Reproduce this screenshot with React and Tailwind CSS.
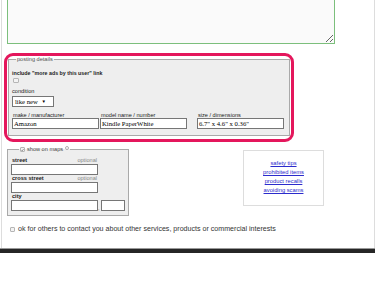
export default function App() {
  const sans = { fontFamily: '"Liberation Sans", Arial, sans-serif' };
  const serif = { fontFamily: '"Liberation Serif", "Times New Roman", serif' };
  const Input = ({ w, value }) => (
    <div
      className={`h-[11px] ${w} shrink-0 border border-[#767676] bg-white text-[6.7px] leading-[9px] pl-[1px] text-black overflow-hidden whitespace-nowrap`}
      style={serif}
    >
      {value}
    </div>
  );
  return (
    <div className="w-[375px] h-[281px] overflow-hidden bg-white" style={sans}>
      <div className="ml-px w-[374px] h-[248px] border-l border-r border-[#dddddd] overflow-hidden">
        <textarea
          className="block ml-[5px] w-[328px] h-[44px] border border-t-0 border-[#7cbf7c] bg-[#fafafa] outline-none"
          defaultValue=""
        />
        <div className="mt-[9px] ml-[2px] w-[290px] h-[89px] border-[3px] border-[#e4175c] rounded-[9px] overflow-hidden">
          <fieldset className="ml-px w-[282px] border border-[#a9a9a9] bg-[#eeeeee] px-px pb-[6px]">
            <legend className="ml-[6px] px-px text-[5.6px] leading-[7px] text-[#555]">posting details</legend>
            <div className="mt-[7px] ml-[2px] text-[5.3px] leading-[7px] font-bold text-[#222]">
              include "more ads by this user" link
            </div>
            <div className="mt-px ml-[3px] w-[6px] h-[5px] border border-[#b5b5b5] rounded-[1px] bg-[#f3f3f3]" />
            <div className="mt-[5px] ml-[2px] text-[5.6px] leading-[7px] text-[#222]">condition</div>
            <div
              className="mt-px ml-[2px] w-[42px] h-[11px] border border-[#767676] bg-white flex items-center justify-between pl-[2px] pr-[7px]"
            >
              <span className="text-[6.7px] leading-[9px] text-black" style={serif}>like new</span>
              <span className="text-[4.5px] leading-[5px] text-black">▼</span>
            </div>
            <div className="mt-[5px] flex">
              <div className="ml-[2px] w-[87px]">
                <div className="pl-px text-[5.6px] leading-[6px] text-[#222] whitespace-nowrap">make / manufacturer</div>
                <Input w="w-[87px]" value="Amazon" />
              </div>
              <div className="ml-px w-[87px]">
                <div className="pl-px text-[5.6px] leading-[6px] text-[#222] whitespace-nowrap">model name / number</div>
                <Input w="w-[87px]" value="Kindle PaperWhite" />
              </div>
              <div className="ml-[10px] w-[87px]">
                <div className="pl-px text-[5.6px] leading-[6px] text-[#222] whitespace-nowrap">size / dimensions</div>
                <Input w="w-[87px]" value={'6.7" x 4.6" x 0.36"'} />
              </div>
            </div>
          </fieldset>
        </div>
        <div className="mt-[4px] flex items-start">
          <fieldset className="ml-[5px] w-[122px] shrink-0 border border-[#a9a9a9] bg-[#eeeeee] pb-[4px]">
            <legend className="ml-[11px] px-px flex items-center text-[5.6px] leading-[7px] text-[#444]">
              <span className="w-[5px] h-[5px] border border-[#b5b5b5] rounded-[1px] bg-[#f3f3f3] flex items-center justify-center">
                <svg width="4" height="4" viewBox="0 0 4 4">
                  <path d="M0.5 2 L1.6 3.1 L3.5 0.8" stroke="#555" strokeWidth="0.8" fill="none" />
                </svg>
              </span>
              <span className="ml-[2px]">show on maps</span>
              <svg className="ml-[2px] -mt-[3px]" width="4" height="4" viewBox="0 0 4 4">
                <circle cx="2" cy="2" r="1.5" stroke="#666" strokeWidth="0.5" fill="none" />
              </svg>
            </legend>
            <div className="mt-[4px] ml-[3px]">
              <div className="w-[87px] flex justify-between px-px text-[5.6px] leading-[6px]">
                <span className="font-bold text-[#222]">street</span>
                <span className="text-[#888]">optional</span>
              </div>
              <div className="mt-px"><Input w="w-[87px]" value="" /></div>
              <div className="w-[87px] flex justify-between px-px text-[5.6px] leading-[6px]">
                <span className="font-bold text-[#222]">cross street</span>
                <span className="text-[#888]">optional</span>
              </div>
              <div className="mt-px"><Input w="w-[87px]" value="" /></div>
              <div className="px-px text-[5.6px] leading-[6px] font-bold text-[#222]">city</div>
              <div className="mt-px flex items-end">
                <Input w="w-[87px]" value="" />
                <span className="w-[3px] shrink-0 text-[5.6px] leading-[5px] text-[#222]">,</span>
                <Input w="w-[24px]" value="" />
              </div>
            </div>
          </fieldset>
          <div className="ml-[114px] mt-[4px] w-[81px] h-[56px] shrink-0 border border-[#dddddd] pt-[8px] flex flex-col items-center">
            {["safety tips", "prohibited items", "product recalls", "avoiding scams"].map((t) => (
              <span key={t} className="text-[5.8px] leading-[9px] text-[#2b2bcc] underline">{t}</span>
            ))}
          </div>
        </div>
        <div className="mt-[9px] ml-[8px] flex items-center h-[8px]">
          <span className="w-[5px] h-[5px] border border-[#b5b5b5] rounded-[1px] bg-[#f3f3f3]" />
          <span className="ml-[3px] text-[7.1px] leading-[8px] text-[#333] whitespace-nowrap">
            ok for others to contact you about other services, products or commercial interests
          </span>
        </div>
      </div>
      <div className="h-px bg-[#999999]" />
      <div className="h-[4px] bg-[#262626]" />
    </div>
  );
}
